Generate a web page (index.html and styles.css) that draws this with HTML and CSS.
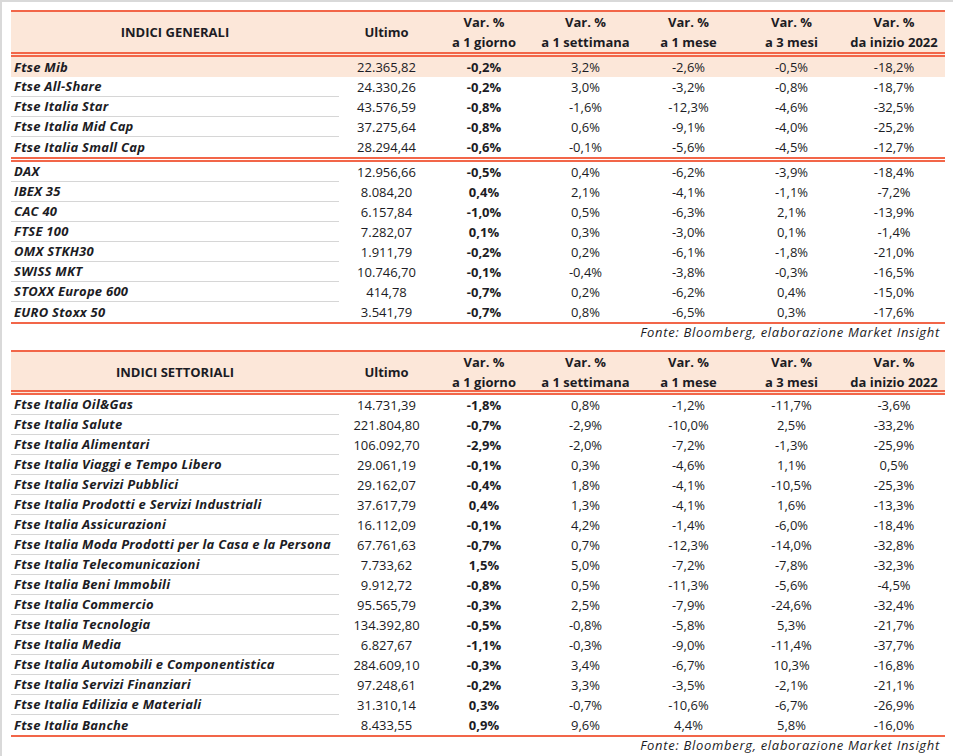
FILE: index.html
```html
<!DOCTYPE html>
<html lang="it">
<head>
<meta charset="utf-8">
<title>Indici</title>
<link rel="stylesheet" href="styles.css">
</head>
<body>
<div class="frame">
  <div class="tbl">
    <div class="head">
      <div class="c title">INDICI GENERALI</div>
      <div class="c">Ultimo</div>
      <div class="c">Var. %<br>a 1 giorno</div>
      <div class="c">Var. %<br>a 1 settimana</div>
      <div class="c">Var. %<br>a 1 mese</div>
      <div class="c">Var. %<br>a 3 mesi</div>
      <div class="c">Var. %<br>da inizio 2022</div>
    </div>
    <div class="group">
      <div class="row hl"><div class="name">Ftse Mib</div><div>22.365,82</div><div class="d1">-0,2%</div><div>3,2%</div><div>-2,6%</div><div>-0,5%</div><div>-18,2%</div></div>
      <div class="row"><div class="name">Ftse All-Share</div><div>24.330,26</div><div class="d1">-0,2%</div><div>3,0%</div><div>-3,2%</div><div>-0,8%</div><div>-18,7%</div></div>
      <div class="row"><div class="name">Ftse Italia Star</div><div>43.576,59</div><div class="d1">-0,8%</div><div>-1,6%</div><div>-12,3%</div><div>-4,6%</div><div>-32,5%</div></div>
      <div class="row"><div class="name">Ftse Italia Mid Cap</div><div>37.275,64</div><div class="d1">-0,8%</div><div>0,6%</div><div>-9,1%</div><div>-4,0%</div><div>-25,2%</div></div>
      <div class="row"><div class="name">Ftse Italia Small Cap</div><div>28.294,44</div><div class="d1">-0,6%</div><div>-0,1%</div><div>-5,6%</div><div>-4,5%</div><div>-12,7%</div></div>
    </div>
    <div class="group end">
      <div class="row"><div class="name">DAX</div><div>12.956,66</div><div class="d1">-0,5%</div><div>0,4%</div><div>-6,2%</div><div>-3,9%</div><div>-18,4%</div></div>
      <div class="row"><div class="name">IBEX 35</div><div>8.084,20</div><div class="d1">0,4%</div><div>2,1%</div><div>-4,1%</div><div>-1,1%</div><div>-7,2%</div></div>
      <div class="row"><div class="name">CAC 40</div><div>6.157,84</div><div class="d1">-1,0%</div><div>0,5%</div><div>-6,3%</div><div>2,1%</div><div>-13,9%</div></div>
      <div class="row"><div class="name">FTSE 100</div><div>7.282,07</div><div class="d1">0,1%</div><div>0,3%</div><div>-3,0%</div><div>0,1%</div><div>-1,4%</div></div>
      <div class="row"><div class="name">OMX STKH30</div><div>1.911,79</div><div class="d1">-0,2%</div><div>0,2%</div><div>-6,1%</div><div>-1,8%</div><div>-21,0%</div></div>
      <div class="row"><div class="name">SWISS MKT</div><div>10.746,70</div><div class="d1">-0,1%</div><div>-0,4%</div><div>-3,8%</div><div>-0,3%</div><div>-16,5%</div></div>
      <div class="row"><div class="name">STOXX Europe 600</div><div>414,78</div><div class="d1">-0,7%</div><div>0,2%</div><div>-6,2%</div><div>0,4%</div><div>-15,0%</div></div>
      <div class="row"><div class="name">EURO Stoxx 50</div><div>3.541,79</div><div class="d1">-0,7%</div><div>0,8%</div><div>-6,5%</div><div>0,3%</div><div>-17,6%</div></div>
    </div>
    <div class="source">Fonte: Bloomberg, elaborazione Market Insight</div>
  </div>

  <div class="tbl">
    <div class="head head2">
      <div class="c title">INDICI SETTORIALI</div>
      <div class="c">Ultimo</div>
      <div class="c">Var. %<br>a 1 giorno</div>
      <div class="c">Var. %<br>a 1 settimana</div>
      <div class="c">Var. %<br>a 1 mese</div>
      <div class="c">Var. %<br>a 3 mesi</div>
      <div class="c">Var. %<br>da inizio 2022</div>
    </div>
    <div class="group end">
      <div class="row"><div class="name">Ftse Italia Oil&amp;Gas</div><div>14.731,39</div><div class="d1">-1,8%</div><div>0,8%</div><div>-1,2%</div><div>-11,7%</div><div>-3,6%</div></div>
      <div class="row"><div class="name">Ftse Italia Salute</div><div>221.804,80</div><div class="d1">-0,7%</div><div>-2,9%</div><div>-10,0%</div><div>2,5%</div><div>-33,2%</div></div>
      <div class="row"><div class="name">Ftse Italia Alimentari</div><div>106.092,70</div><div class="d1">-2,9%</div><div>-2,0%</div><div>-7,2%</div><div>-1,3%</div><div>-25,9%</div></div>
      <div class="row"><div class="name">Ftse Italia Viaggi e Tempo Libero</div><div>29.061,19</div><div class="d1">-0,1%</div><div>0,3%</div><div>-4,6%</div><div>1,1%</div><div>0,5%</div></div>
      <div class="row"><div class="name">Ftse Italia Servizi Pubblici</div><div>29.162,07</div><div class="d1">-0,4%</div><div>1,8%</div><div>-4,1%</div><div>-10,5%</div><div>-25,3%</div></div>
      <div class="row"><div class="name">Ftse Italia Prodotti e Servizi Industriali</div><div>37.617,79</div><div class="d1">0,4%</div><div>1,3%</div><div>-4,1%</div><div>1,6%</div><div>-13,3%</div></div>
      <div class="row"><div class="name">Ftse Italia Assicurazioni</div><div>16.112,09</div><div class="d1">-0,1%</div><div>4,2%</div><div>-1,4%</div><div>-6,0%</div><div>-18,4%</div></div>
      <div class="row"><div class="name">Ftse Italia Moda Prodotti per la Casa e la Persona</div><div>67.761,63</div><div class="d1">-0,7%</div><div>0,7%</div><div>-12,3%</div><div>-14,0%</div><div>-32,8%</div></div>
      <div class="row"><div class="name">Ftse Italia Telecomunicazioni</div><div>7.733,62</div><div class="d1">1,5%</div><div>5,0%</div><div>-7,2%</div><div>-7,8%</div><div>-32,3%</div></div>
      <div class="row"><div class="name">Ftse Italia Beni Immobili</div><div>9.912,72</div><div class="d1">-0,8%</div><div>0,5%</div><div>-11,3%</div><div>-5,6%</div><div>-4,5%</div></div>
      <div class="row"><div class="name">Ftse Italia Commercio</div><div>95.565,79</div><div class="d1">-0,3%</div><div>2,5%</div><div>-7,9%</div><div>-24,6%</div><div>-32,4%</div></div>
      <div class="row"><div class="name">Ftse Italia Tecnologia</div><div>134.392,80</div><div class="d1">-0,5%</div><div>-0,8%</div><div>-5,8%</div><div>5,3%</div><div>-21,7%</div></div>
      <div class="row"><div class="name">Ftse Italia Media</div><div>6.827,67</div><div class="d1">-1,1%</div><div>-0,3%</div><div>-9,0%</div><div>-11,4%</div><div>-37,7%</div></div>
      <div class="row"><div class="name">Ftse Italia Automobili e Componentistica</div><div>284.609,10</div><div class="d1">-0,3%</div><div>3,4%</div><div>-6,7%</div><div>10,3%</div><div>-16,8%</div></div>
      <div class="row"><div class="name">Ftse Italia Servizi Finanziari</div><div>97.248,61</div><div class="d1">-0,2%</div><div>3,3%</div><div>-3,5%</div><div>-2,1%</div><div>-21,1%</div></div>
      <div class="row"><div class="name">Ftse Italia Edilizia e Materiali</div><div>31.310,14</div><div class="d1">0,3%</div><div>-0,7%</div><div>-10,6%</div><div>-6,7%</div><div>-26,9%</div></div>
      <div class="row"><div class="name">Ftse Italia Banche</div><div>8.433,55</div><div class="d1">0,9%</div><div>9,6%</div><div>4,4%</div><div>5,8%</div><div>-16,0%</div></div>
    </div>
    <div class="source">Fonte: Bloomberg, elaborazione Market Insight</div>
  </div>
</div>
</body>
</html>
```

FILE: styles.css
```css
html, body {
  margin: 0;
  padding: 0;
  background: #ffffff;
}

body {
  font-family: "Open Sans", "Liberation Sans", sans-serif;
  font-size: 13px;
  color: #1c1c24;
}

.frame {
  width: 953px;
  height: 756px;
  box-sizing: border-box;
  border-top: 2px solid #d9d9d9;
  border-left: 2px solid #d9d9d9;
  padding: 8px 0 0 9px;
  overflow: hidden;
}

.tbl {
  width: 934px;
}

.head,
.row {
  display: grid;
  grid-template-columns: 328px 95px 100px 103px 103px 103px 102px;
}

.head {
  background: #fce7d9;
  border-top: 2px solid #f26649;
  border-bottom: 5px double #f26649;
  height: 40px;
}

.head2 {
  height: 38px;
}

.head .c {
  display: flex;
  align-items: center;
  justify-content: center;
  text-align: center;
  font-weight: 700;
  line-height: 20px;
}

.row > div {
  box-sizing: border-box;
  height: 20px;
  line-height: 20px;
  text-align: center;
  white-space: nowrap;
}

.row .name {
  text-align: left;
  padding-left: 3px;
  font-weight: 700;
  font-style: italic;
  letter-spacing: 0.25px;
  border-bottom: 1px solid #d6d6d6;
  line-height: 19px;
}

.group .row:last-child .name,
.row.hl .name {
  border-bottom: none;
  line-height: 20px;
}

.row.hl {
  background: #fce7d9;
}

.row .d1 {
  font-weight: 700;
}

.group {
  border-bottom: 5px double #f26649;
}

.group.end {
  border-bottom: 2px solid #f26649;
}

.source {
  height: 17px;
  line-height: 17px;
  padding: 0 5px 9px 0;
  text-align: right;
  font-style: italic;
  letter-spacing: 0.7px;
}
```
